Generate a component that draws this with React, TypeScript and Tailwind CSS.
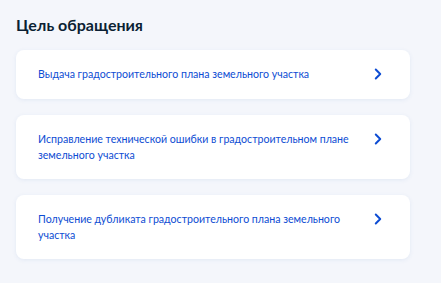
import { ChevronRight } from 'lucide-react';

const items = [
  'Выдача градостроительного плана земельного участка',
  'Исправление технической ошибки в градостроительном плане земельного участка',
  'Получение дубликата градостроительного плана земельного участка',
];

export default function App() {
  return (
    <div className="min-h-[283px] w-[441px] bg-[#f4f6fb] font-['Lato',sans-serif]">
      <div className="px-4 pt-[15px] pb-6">
        <h2 className="text-[16px] font-bold leading-[20px] text-[#0b1f33]">Цель обращения</h2>

        <div className="mt-[15px] flex w-[394px] flex-col gap-4">
          {items.map((label) => (
            <button
              key={label}
              className="flex items-start rounded-lg bg-white py-4 pl-[22px] pr-[23px] text-left shadow-[0_1px_4px_rgba(102,137,194,0.12)]"
            >
              <span className="flex-1 pr-2 text-[10.6px] leading-4 text-[#0d4cd3]">{label}</span>
              <ChevronRight className="mt-[-1px] h-[18px] w-[18px] text-[#0d4cd3]" strokeWidth={2.6} />
            </button>
          ))}
        </div>
      </div>
    </div>
  );
}
